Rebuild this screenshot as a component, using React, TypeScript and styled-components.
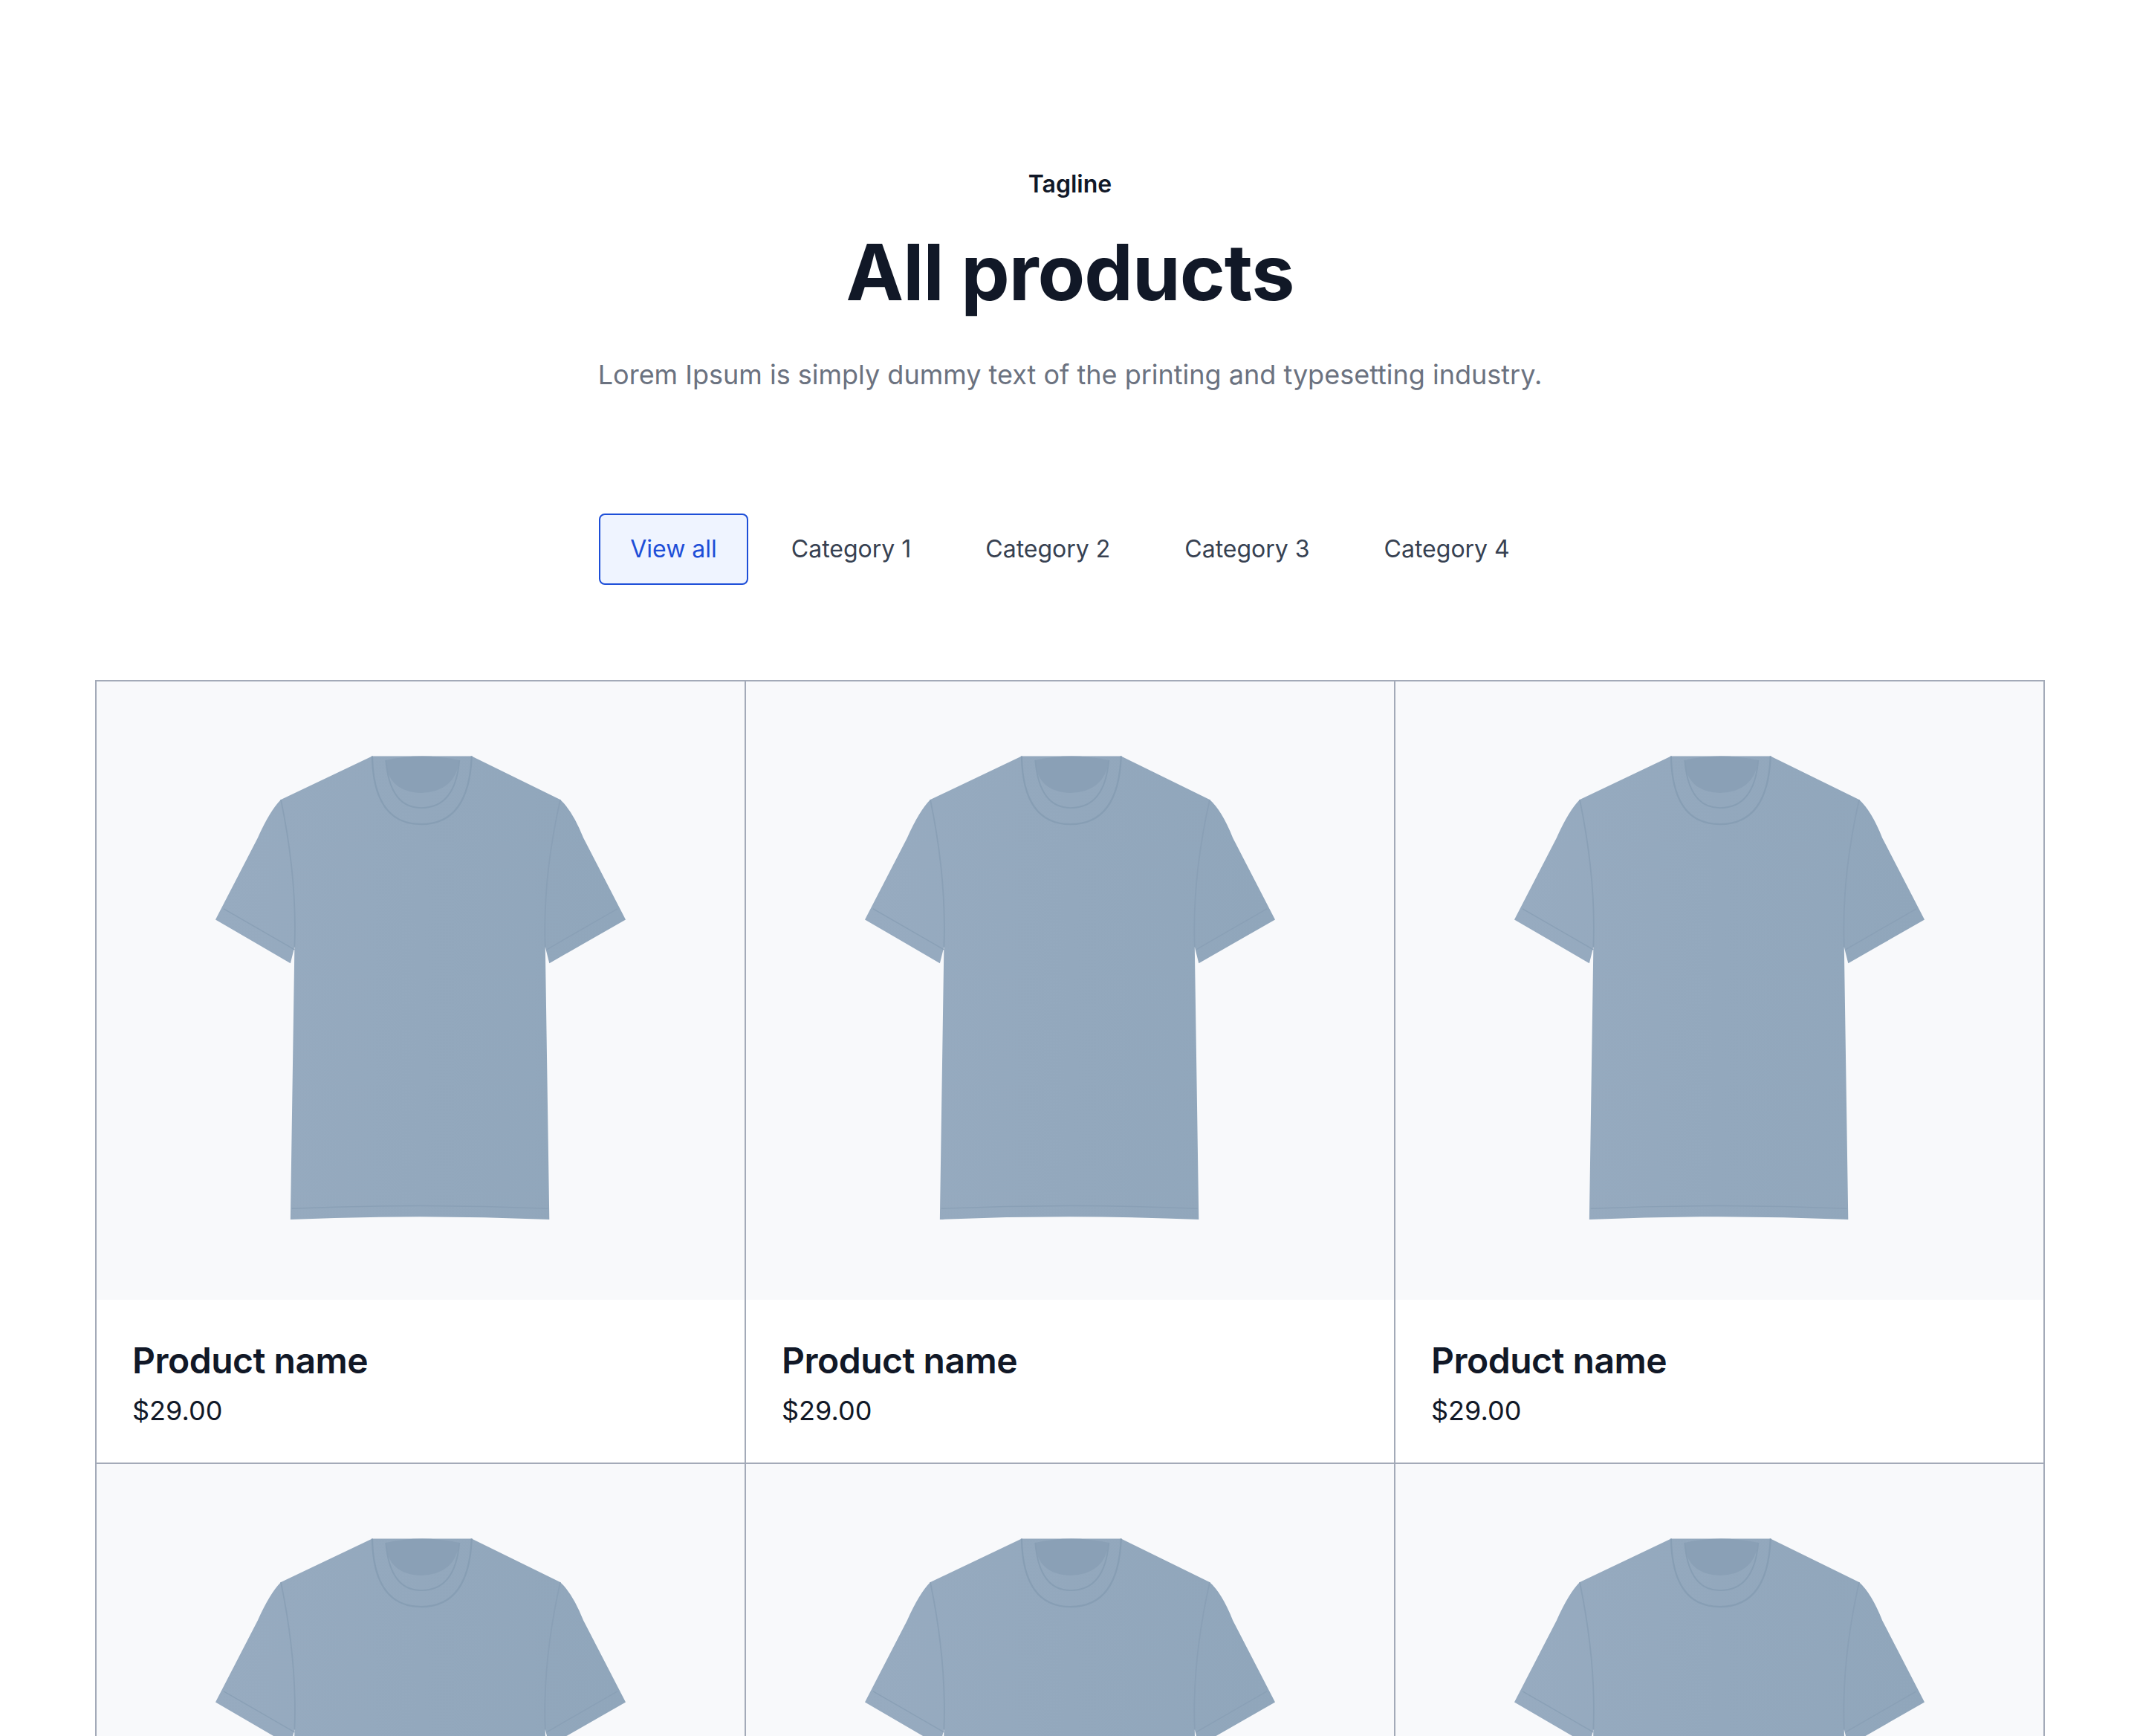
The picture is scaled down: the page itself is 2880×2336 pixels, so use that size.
import React from "react";
import styled, { createGlobalStyle } from "styled-components";

const Global = createGlobalStyle`
  body { margin: 0; background: #fff; font-family: Inter, "Noto Sans", sans-serif; color: #111827; }
`;

const Section = styled.section`
  padding: 224px 128px 0;
  display: flex; flex-direction: column; align-items: center;
`;
const Tagline = styled.div`font-size: 32px; font-weight: 600; line-height: 1.5; margin-bottom: 32px;`;
const Title = styled.h2`font-size: 104px; font-weight: 700; letter-spacing: -1px; line-height: 1.2; margin: 0 0 48px;`;
const Lead = styled.p`font-size: 36px; color: #6b7280; line-height: 1.5; margin: 0;`;
const Tabs = styled.div`display: flex; gap: 16px; margin-top: 160px;`;
const Tab = styled.button<{ $active?: boolean }>`
  font-family: Inter, sans-serif; font-size: 32px; height: 96px; padding: 0 40px; border-radius: 8px; cursor: pointer;
  border: 2px solid ${p => (p.$active ? "#1d4ed8" : "transparent")};
  background: ${p => (p.$active ? "#eff4ff" : "transparent")};
  color: ${p => (p.$active ? "#1d4ed8" : "#374151")};
`;
const Grid = styled.div`
  align-self: stretch; margin-top: 128px; display: grid; grid-template-columns: repeat(3, 1fr);
  border-top: 2px solid #a3aab8; border-left: 2px solid #a3aab8;
`;
const Card = styled.div`border-right: 2px solid #a3aab8; border-bottom: 2px solid #a3aab8;`;
const ImageBox = styled.div`height: 832px; background: #f8f9fb; display: flex; justify-content: center; padding-top: 100px; box-sizing: border-box;`;
const Info = styled.div`padding: 48px;`;
const Name = styled.div`font-size: 48px; font-weight: 600; line-height: 1.4; letter-spacing: -0.5px;`;
const Price = styled.div`font-size: 36px; margin-top: 12px; color: #111827;`;

const Shirt = () => (
  <svg width="552" height="628" viewBox="0 0 301 342">
    <defs>
      <linearGradient id="g" x1="0" x2="1">
        <stop offset="0" stopColor="#97abc0" />
        <stop offset="0.5" stopColor="#93a8bd" />
        <stop offset="1" stopColor="#90a6bb" />
      </linearGradient>
    </defs>
    <path d="M115 0 L188 0 L253 32 Q262 40 270 60 L301 120 L245 152 L242 140 L245 340 Q150 336 55 340 L58 140 L55 152 L0 120 L31 60 Q40 40 48 32 Z" fill="url(#g)" />
    <path d="M125 3 Q151 -3 179 3 Q176 26 151 27 Q126 26 125 3 Z" fill="#8aa0b6" />
    <path d="M115 0 Q116 50 151 50 Q186 50 188 0" fill="none" stroke="#879eb4" strokeWidth="1.2" />
    <path d="M125 3 Q128 38 151 38 Q176 38 179 3" fill="none" stroke="#879eb4" strokeWidth="1" />
    <path d="M58 140 Q60 90 48 32 M242 140 Q240 90 253 32" fill="none" stroke="#8aa0b6" strokeWidth="1" />
    <path d="M6 112 L58 142 M295 112 L243 142 M56 332 Q150 328 244 332" fill="none" stroke="#8aa0b6" strokeWidth="0.8" />
  </svg>
);

export default function App() {
  const tabs = ["View all", "Category 1", "Category 2", "Category 3", "Category 4"];
  return (
    <>
      <Global />
      <Section>
        <Tagline>Tagline</Tagline>
        <Title>All products</Title>
        <Lead>Lorem Ipsum is simply dummy text of the printing and typesetting industry.</Lead>
        <Tabs>{tabs.map((t, i) => <Tab key={t} $active={i === 0}>{t}</Tab>)}</Tabs>
        <Grid>
          {Array.from({ length: 6 }).map((_, i) => (
            <Card key={i}>
              <ImageBox><Shirt /></ImageBox>
              <Info><Name>Product name</Name><Price>$29.00</Price></Info>
            </Card>
          ))}
        </Grid>
      </Section>
    </>
  );
}
